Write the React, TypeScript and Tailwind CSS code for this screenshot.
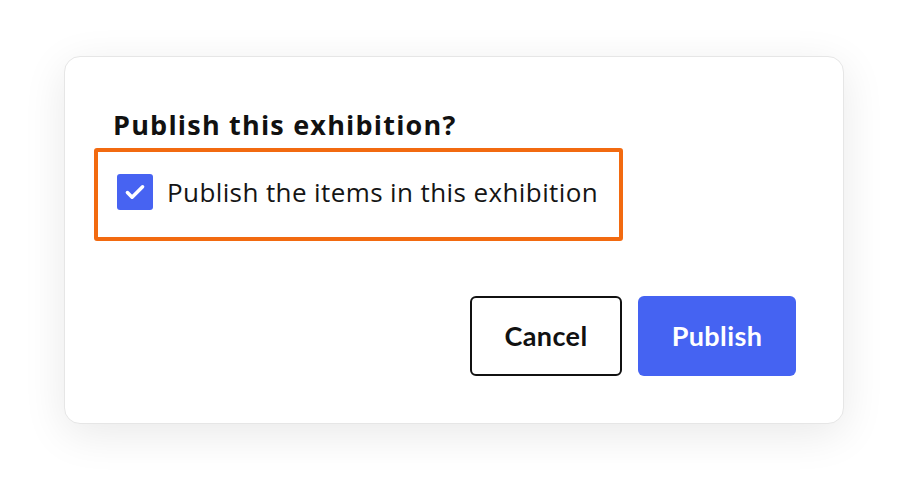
export default function App() {
  return (
    <div className="w-[908px] h-[496px] bg-white pt-[56px] pl-[64px]" style={{ fontFamily: "'Open Sans', 'Noto Sans', sans-serif" }}>
      <div className="w-[780px] h-[368px] rounded-2xl border border-[#e6e6e6] bg-white shadow-[0_10px_44px_rgba(0,0,0,0.09)] flex flex-col pl-[29px] pr-[47px] pb-[47px] pt-[51px]">
        <h2 className="pl-[19px] text-[27px] leading-[34px] font-bold text-[#111] tracking-[1.2px]">Publish this exhibition?</h2>
        <label className="mt-[6px] w-[529px] h-[93px] border-4 border-[#f26a10] rounded-[3px] flex items-center pl-[19px] pb-[5px] gap-[14px]">
          <span className="w-9 h-9 rounded-[3px] bg-[#4763f2] flex items-center justify-center">
            <svg width="28" height="28" viewBox="0 0 24 24" fill="none" stroke="white" strokeWidth="3" strokeLinecap="round" strokeLinejoin="round">
              <path d="M5.5 12.5l4 4L18.5 7.5" />
            </svg>
          </span>
          <span className="text-[26px] text-[#151515] tracking-[0.4px]">Publish the items in this exhibition</span>
        </label>
        <div className="mt-auto flex justify-end gap-4" style={{ fontFamily: "Lato, sans-serif" }}>
          <button className="w-[152px] h-20 rounded-md border-2 border-[#111] bg-white text-[27px] font-bold text-[#111] tracking-[0.4px]">Cancel</button>
          <button className="w-[158px] h-20 rounded-md bg-[#4563f2] text-[27px] font-bold text-white tracking-[0.4px]">Publish</button>
        </div>
      </div>
    </div>
  )
}
